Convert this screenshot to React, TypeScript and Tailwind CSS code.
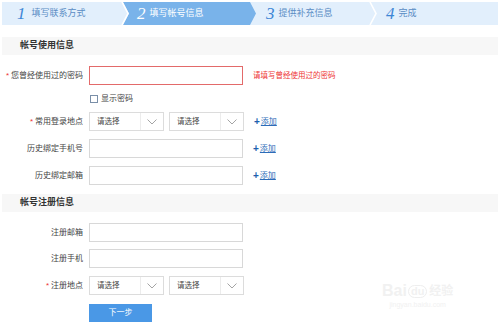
import React from "react";

const font = { fontFamily: '"Liberation Sans", "Noto Sans CJK SC", sans-serif' };

function Label({ text, req }: { text: string; req?: boolean }) {
  return (
    <div className="w-[84px] shrink-0 pr-[1px] text-right text-[8px] leading-[18px] text-[#444]">
      {req && <span className="mr-[2px] text-[8px] text-[#e33]">*</span>}
      {text}
    </div>
  );
}

function Input({ error }: { error?: boolean }) {
  return (
    <div
      className={
        "ml-[5px] h-[19px] w-[154px] shrink-0 bg-white " +
        (error ? "border border-[#e36a6a]" : "border border-[#d8d8d8]")
      }
    />
  );
}

function Select() {
  return (
    <div className="flex h-[19px] w-[75px] shrink-0 items-center border border-[#dcdcdc] bg-white">
      <div className="flex-1 pl-[7px] text-[7.5px] text-[#444]">请选择</div>
      <div className="flex h-full w-[23px] items-center justify-center border-l border-[#ececec]">
        <svg width="10" height="6" viewBox="0 0 10 6">
          <path d="M0.5 0.5 L5 5 L9.5 0.5" fill="none" stroke="#9a9a9a" strokeWidth="0.9" />
        </svg>
      </div>
    </div>
  );
}

function Add() {
  return (
    <div className="ml-[10px] flex items-center text-[8px] leading-none">
      <span className="mr-[1px] text-[10px] font-bold text-[#1d5fae]">+</span>
      <span className="text-[#2c6cb8] underline">添加</span>
    </div>
  );
}

function Band({ text }: { text: string }) {
  return (
    <div className="mx-[2px] flex h-[18px] items-center bg-[#f7f7f7] pl-[18px] text-[9px] font-bold text-[#333]">
      {text}
    </div>
  );
}

export default function App() {
  return (
    <div className="relative h-[328px] w-[500px] overflow-hidden bg-white" style={font}>
      {/* step bar */}
      <div className="relative mx-[2px] mt-[2px] h-[23px] bg-[#e2effc]">
        <svg className="absolute left-0 top-0" width="496" height="23" viewBox="0 0 496 23">
          <polygon points="121,0 248,0 254,11.5 248,23 121,23 127,11.5" fill="#79b3ea" />
          <polyline points="120,0 126,11.5 120,23" fill="none" stroke="#ffffff" strokeWidth="1.6" />
          <polyline points="368,0 374,11.5 368,23" fill="none" stroke="#ffffff" strokeWidth="1.6" />
        </svg>
        <div className="relative flex h-full items-center">
          <div className="absolute left-[15px] flex items-center">
            <span className="text-[17px] italic leading-none text-[#3d86d6]" style={{ fontFamily: '"Liberation Serif", serif' }}>1</span>
            <span className="ml-[6px] text-[9px] text-[#5a8cc4]">填写联系方式</span>
          </div>
          <div className="absolute left-[135px] flex items-center">
            <span className="text-[17px] italic leading-none text-white" style={{ fontFamily: '"Liberation Serif", serif' }}>2</span>
            <span className="ml-[4px] text-[9px] text-white">填写帐号信息</span>
          </div>
          <div className="absolute left-[264px] flex items-center">
            <span className="text-[17px] italic leading-none text-[#3d86d6]" style={{ fontFamily: '"Liberation Serif", serif' }}>3</span>
            <span className="ml-[4px] text-[9px] text-[#5a8cc4]">提供补充信息</span>
          </div>
          <div className="absolute left-[384px] flex items-center">
            <span className="text-[17px] italic leading-none text-[#3d86d6]" style={{ fontFamily: '"Liberation Serif", serif' }}>4</span>
            <span className="ml-[4px] text-[9px] text-[#5a8cc4]">完成</span>
          </div>
        </div>
      </div>

      <div className="mt-[12px]">
        <Band text="帐号使用信息" />
      </div>

      <div className="mt-[11px] flex items-center">
        <Label text="您曾经使用过的密码" req />
        <Input error />
        <div className="ml-[10px] text-[7.5px] text-[#e33]">请填写曾经使用过的密码</div>
      </div>

      <div className="mt-[9px] flex h-[10px] items-center pl-[90px]">
        <div className="h-[8px] w-[8px] border border-[#7a8fa8] bg-white" />
        <span className="ml-[3px] text-[8px] text-[#444]">显示密码</span>
      </div>

      <div className="mt-[8px] flex items-center">
        <Label text="常用登录地点" req />
        <div className="ml-[5px] flex gap-[5px]">
          <Select />
          <Select />
        </div>
        <Add />
      </div>

      <div className="mt-[8px] flex items-center">
        <Label text="历史绑定手机号" />
        <Input />
        <Add />
      </div>

      <div className="mt-[8px] flex items-center">
        <Label text="历史绑定邮箱" />
        <Input />
        <Add />
      </div>

      <div className="mt-[9px]">
        <Band text="帐号注册信息" />
      </div>

      <div className="mt-[11px] flex items-center">
        <Label text="注册邮箱" />
        <Input />
      </div>

      <div className="mt-[7px] flex items-center">
        <Label text="注册手机" />
        <Input />
      </div>

      <div className="mt-[8px] flex items-center">
        <Label text="注册地点" req />
        <div className="ml-[5px] flex gap-[5px]">
          <Select />
          <Select />
        </div>
      </div>

      <div className="mt-[9px] pl-[89px]">
        <div className="flex h-[18px] w-[63px] items-center justify-center bg-[#4a98e6] text-[8px] text-white">
          下一步
        </div>
      </div>

      {/* watermark */}
      <div className="absolute left-[382px] top-[283px] flex flex-col items-center text-[#f1f1f1]">
        <div className="flex items-center text-[16px] font-bold leading-none">
          <span>Bai</span>
          <span className="ml-[1px] rounded-full border border-[#eeeeee] px-[2px] text-[11px]">du</span>
          <span className="ml-[2px] text-[12px]">经验</span>
        </div>
        <div className="mt-[2px] text-[7px] leading-none">jingyan.baidu.com</div>
      </div>
    </div>
  );
}
